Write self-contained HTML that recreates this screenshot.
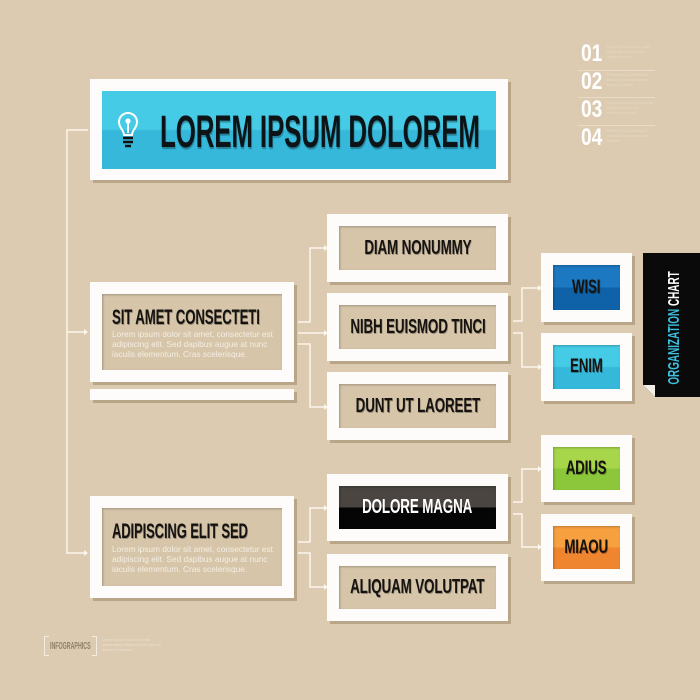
<!DOCTYPE html>
<html><head><meta charset="utf-8"><style>
*{margin:0;padding:0;box-sizing:border-box}
body{width:700px;height:700px;background:#dccbb1;position:relative;overflow:hidden;font-family:"Liberation Sans Narrow","Liberation Sans",sans-serif}
.o{position:absolute;background:#fdfcfa;box-shadow:3px 3px 0 rgba(120,95,60,.35)}
.i{position:absolute;left:12px;top:12px;right:12px;bottom:12px;background:#d6c5a9;box-shadow:inset 1px 1px 2px rgba(0,0,0,.25);display:flex;align-items:center;justify-content:center}
.h{font-weight:bold;color:#151210;white-space:nowrap;display:inline-block;transform:scaleX(.67);text-shadow:1px 1px 0 rgba(0,0,0,.3);letter-spacing:-.2px}
.m .h{font-size:20px}
.r .h{font-size:19px;transform:scaleX(.7)}
.p{position:absolute;color:#f4eee3;font-family:"Liberation Sans",sans-serif;font-size:8.3px;line-height:10px;white-space:nowrap}
.n{position:absolute;left:581px;color:#fff;font-weight:bold;font-size:24px;transform:scaleX(.8);transform-origin:left}
.nt{position:absolute;left:607px;width:50px;height:20px;font-size:4px;line-height:5px;color:#e6d9c4;font-family:"Liberation Sans",sans-serif}
.sep{position:absolute;left:578px;width:77px;height:1px;background:#e8dcc9}
</style></head><body>

<svg width="700" height="700" style="position:absolute;left:0;top:0" fill="none" stroke="#fbf6ee" stroke-width="1.5">
<path d="M88 130H67V553H84M67 332H84"/>
<path d="M298 322H310V248H324M298 333H324M298 344H310V407H324"/>
<path d="M513 321H522V288H538M513 333H522V367H538"/>
<path d="M298 542H310V508H324M298 553H310V587H324"/>
<path d="M513 502H522V469H538M513 514H522V547H538"/>
<g fill="#fbf6ee" stroke="none">
<path d="M84 329l4 3-4 3z M84 550l4 3-4 3z M324 245l4 3-4 3z M324 330l4 3-4 3z M324 404l4 3-4 3z M538 285l4 3-4 3z M538 364l4 3-4 3z M324 505l4 3-4 3z M324 584l4 3-4 3z M538 466l4 3-4 3z M538 544l4 3-4 3z"/>
</g>
</svg>

<div class="o" style="left:90px;top:79px;width:418px;height:101px">
 <div style="position:absolute;left:12px;top:12px;right:12px;bottom:11px;background:linear-gradient(#45cbe6 0 49%,#35b8da 51%)">
  <svg style="position:absolute;left:15px;top:20px" width="22" height="38" viewBox="0 0 22 38" fill="none" stroke="#fff" stroke-width="2"><path d="M7 24C7 19 2 17 2 11a9 9 0 0 1 18 0c0 6-5 8-5 13z"/><path d="M11 22V11"/><circle cx="11" cy="10" r="1.6" fill="#fff"/><path d="M6 27h10M6 31h10M8 35h6" stroke="#111" stroke-width="2.5"/></svg>
  <div class="h" style="position:absolute;left:58px;top:15px;font-size:45px;transform:scaleX(.575);transform-origin:left;color:#0c1418;text-shadow:1px 2px 1px rgba(0,0,0,.3)">LOREM IPSUM DOLOREM</div>
 </div>
</div>

<div class="o" style="left:90px;top:282px;width:204px;height:100px"><div class="i" style="display:block">
 <div class="h" style="position:absolute;left:10px;top:12px;font-size:21px;transform:scaleX(.63);transform-origin:left">SIT AMET CONSECTETI</div>
 <div class="p" style="left:10px;top:35px">Lorem ipsum dolor sit amet, consectetur est<br>adipiscing elit. Sed dapibus augue at nunc<br>iaculis elementum. Cras scelerisque.</div>
</div></div>
<div class="o" style="left:90px;top:389px;width:204px;height:11px"></div>

<div class="o" style="left:90px;top:496px;width:204px;height:102px"><div class="i" style="display:block">
 <div class="h" style="position:absolute;left:10px;top:12px;font-size:21px;transform:scaleX(.62);transform-origin:left">ADIPISCING ELIT SED</div>
 <div class="p" style="left:10px;top:36px">Lorem ipsum dolor sit amet, consectetur est<br>adipiscing elit. Sed dapibus augue at nunc<br>iaculis elementum. Cras scelerisque.</div>
</div></div>

<div class="o m" style="left:327px;top:214px;width:181px;height:68px"><div class="i"><span class="h">DIAM NONUMMY</span></div></div>
<div class="o m" style="left:327px;top:293px;width:181px;height:68px"><div class="i"><span class="h">NIBH EUISMOD TINCI</span></div></div>
<div class="o m" style="left:327px;top:372px;width:181px;height:68px"><div class="i"><span class="h">DUNT UT LAOREET</span></div></div>
<div class="o m" style="left:327px;top:474px;width:181px;height:67px"><div class="i" style="background:linear-gradient(#4a4540 0 49%,#050505 51%)"><span class="h" style="color:#fff;text-shadow:none">DOLORE MAGNA</span></div></div>
<div class="o m" style="left:327px;top:554px;width:181px;height:67px"><div class="i"><span class="h">ALIQUAM VOLUTPAT</span></div></div>

<div class="o r" style="left:541px;top:253px;width:91px;height:69px"><div class="i" style="background:linear-gradient(#1c78c0 0 49%,#0f62a8 51%)"><span class="h">WISI</span></div></div>
<div class="o r" style="left:541px;top:333px;width:91px;height:68px"><div class="i" style="background:linear-gradient(#45cbe6 0 49%,#35b8da 51%)"><span class="h">ENIM</span></div></div>
<div class="o r" style="left:541px;top:435px;width:91px;height:67px"><div class="i" style="background:linear-gradient(#a7d64a 0 49%,#8cc63a 51%)"><span class="h">ADIUS</span></div></div>
<div class="o r" style="left:541px;top:514px;width:91px;height:67px"><div class="i" style="background:linear-gradient(#f6a040 0 49%,#f08530 51%)"><span class="h">MIAOU</span></div></div>

<div style="position:absolute;left:643px;top:253px;width:57px;height:144px;background:#0a0a0a;clip-path:polygon(0 0,100% 0,100% 100%,12px 100%,0 132px)"></div>
<div style="position:absolute;left:643px;top:385px;width:12px;height:12px;background:#f3ede3;clip-path:polygon(0 0,100% 0,100% 100%)"></div>
<div style="position:absolute;left:675px;top:328px;transform:translate(-50%,-50%) rotate(-90deg) scaleX(.62);font-weight:bold;font-size:16px;white-space:nowrap"><span style="color:#3cc0e0">ORGANIZATION</span> <span style="color:#fff">CHART</span></div>

<div class="n" style="top:40px">01</div><div class="nt" style="top:44px">Lorem ipsum dolor amet facilis donec semper adipiscing elit.</div>
<div class="sep" style="top:70px"></div>
<div class="n" style="top:68px">02</div><div class="nt" style="top:72px">Pellentesque bibendum, fauci et posuere donec tempus sapien</div>
<div class="sep" style="top:97px"></div>
<div class="n" style="top:96px">03</div><div class="nt" style="top:100px">Mauris dignissim, fauci ac vehicula lorem vel vestibulum porta.</div>
<div class="sep" style="top:125px"></div>
<div class="n" style="top:124px">04</div><div class="nt" style="top:128px">Praesent ut justo fauci vehicula est ullamcorper mauris.</div>

<div style="position:absolute;left:44px;top:636px;width:5px;height:20px;border:1.5px solid #f3ece0;border-right:none"></div>
<div style="position:absolute;left:92px;top:636px;width:5px;height:20px;border:1.5px solid #f3ece0;border-left:none"></div>
<div style="position:absolute;left:50px;top:641px;font-size:10px;font-weight:bold;color:#8d7f68;transform:scaleX(.53);transform-origin:left;white-space:nowrap">INFOGRAPHICS</div>
<div style="position:absolute;left:102px;top:637px;width:60px;font-size:4px;line-height:5px;color:#e9dfcf;font-family:'Liberation Sans',sans-serif">Lorem ipsum dolor sit amet consectetur adipiscing elit sed do tempor incididunt</div>
</body></html>
